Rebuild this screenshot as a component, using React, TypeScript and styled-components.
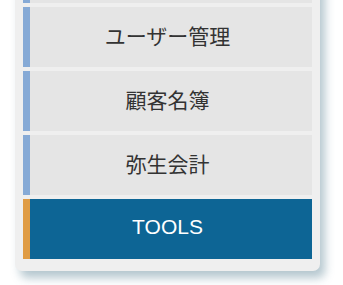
import React from 'react';
import styled, { createGlobalStyle } from 'styled-components';

const GlobalStyle = createGlobalStyle`
    html, body {
        margin: 0;
        padding: 0;
        background: #ffffff;
        overflow: hidden;
    }
`;

const Page = styled.div`
    width: 343px;
    height: 285px;
    overflow: hidden;
    font-family: "Liberation Sans", "Noto Sans CJK JP", sans-serif;
`;

// the menu is scrolled: its first entry is cut off at the top
const Panel = styled.nav`
    width: 305px;
    margin: -65px 0 0 15px;
    padding: 8px 8px 12px 8px;
    box-sizing: border-box;
    background: #efefef;
    border-radius: 0 0 7px 7px;
    box-shadow: 5px 7px 10px rgba(70, 115, 135, 0.4);
    display: flex;
    flex-direction: column;
    gap: 4px;
`;

// the coloured stripe is an inset shadow so the label centres on the full width
const MenuItem = styled.a<{ active?: boolean }>`
    display: flex;
    align-items: center;
    justify-content: center;
    height: 60px;
    padding-bottom: 5px;
    box-sizing: border-box;
    box-shadow: inset 7px 0 0 ${(p) => (p.active ? '#e09c44' : '#86aad6')};
    background: ${(p) => (p.active ? '#0d6595' : '#e5e5e5')};
    color: ${(p) => (p.active ? '#ffffff' : '#333333')};
    font-size: 21px;
    text-decoration: none;
    cursor: pointer;
`;

const items = [
    { label: '', active: false },
    { label: 'ユーザー管理', active: false },
    { label: '顧客名簿', active: false },
    { label: '弥生会計', active: false },
    { label: 'TOOLS', active: true },
];

const App: React.FC = () => {
    return (
        <>
            <GlobalStyle />
            <Page>
                <Panel>
                    {items.map((item, i) => (
                        <MenuItem key={i} active={item.active}>
                            {item.label}
                        </MenuItem>
                    ))}
                </Panel>
            </Page>
        </>
    );
};

export default App;
